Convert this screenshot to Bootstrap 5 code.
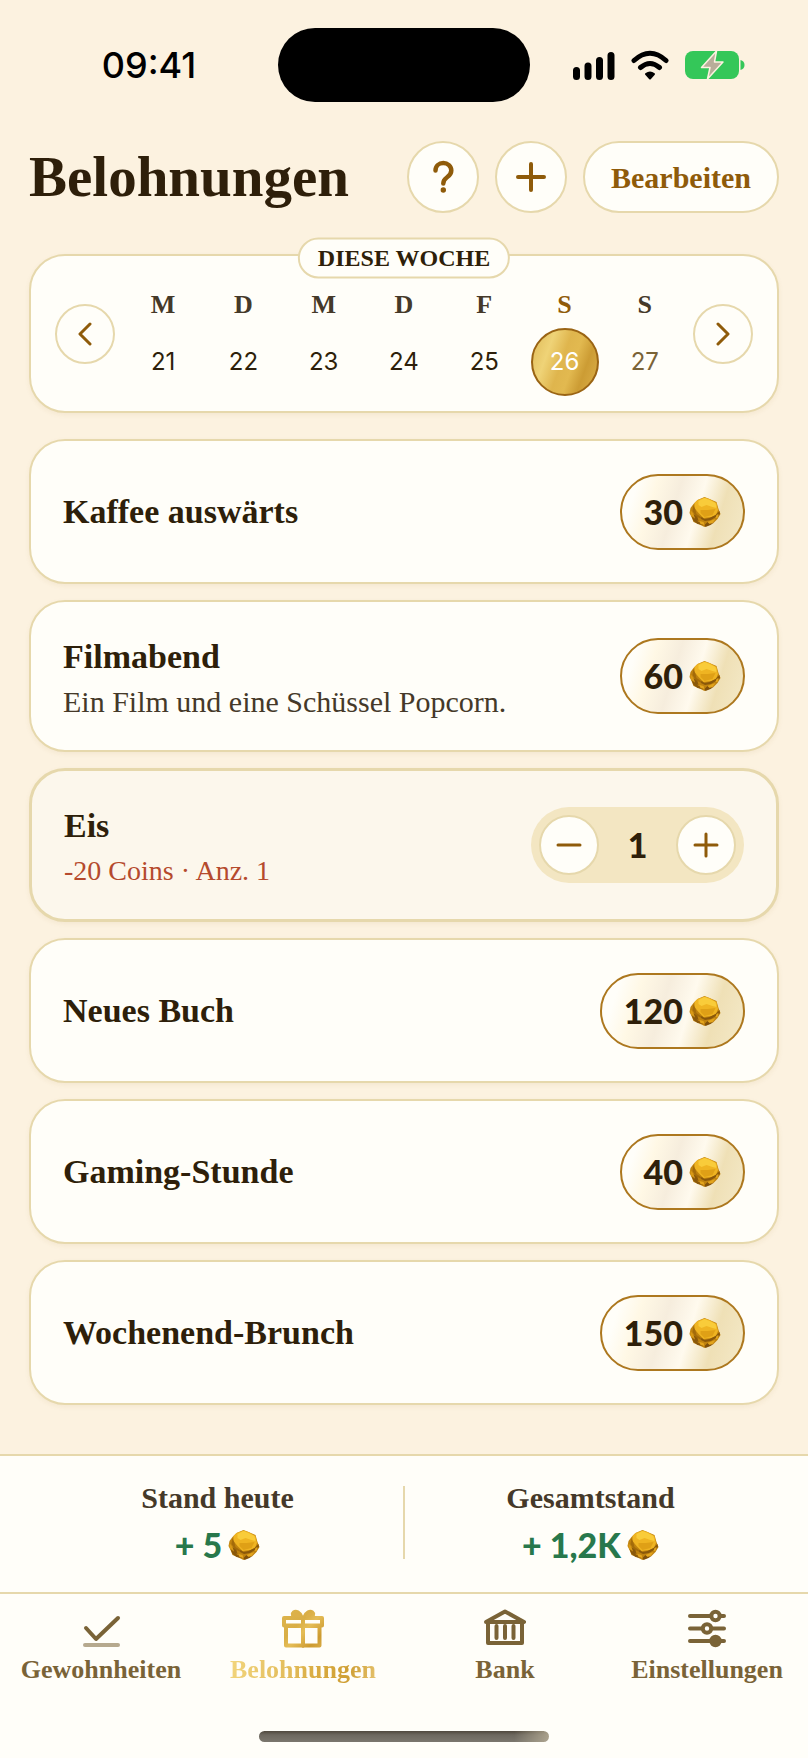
<!DOCTYPE html>
<html lang="de">
<head>
<meta charset="utf-8">
<meta name="viewport" content="width=device-width, initial-scale=1">
<title>Belohnungen</title>
<link href="https://cdn.jsdelivr.net/npm/bootstrap@5.3.0/dist/css/bootstrap.min.css" rel="stylesheet">
<style>
  :root {
    --paper: #fcf2e0;
    --surface: #fffef9;
    --line: #e6d8ac;
    --ink: #2e1f0a;
    --ink-soft: #453929;
    --accent: #8f5b0a;
    --tab: #7a6337;
    --gold: linear-gradient(110deg, #dfba58 0%, #efd377 26%, #dfb54d 46%, #e2b950 60%, #cc9c34 76%, #dcb04a 100%);
    --serif: "Liberation Serif", "Times New Roman", serif;
  }
  body { background: var(--paper); color: var(--ink); font-family: var(--serif); }
  button, a { font-family: inherit; }
  svg { display: block; fill: none; stroke-linecap: round; stroke-linejoin: round; }

  .status-bar { display: grid; grid-template-columns: 1fr 252px 1fr; padding: 28px 20px 0; color: #000; }
  .clock { font: 500 36px/40px Inter, sans-serif; }
  .island { height: 74px; background: #000; }

  .page-main { padding: 39px 29px 46px; }
  .page-title { font-size: 57px; line-height: 72px; font-weight: 700; }
  .soft-btn { background: var(--surface); border: 2px solid var(--line); color: var(--accent);
    display: inline-flex; align-items: center; justify-content: center; padding: 0; border-radius: 50%; }
  .head-btn { width: 72px; height: 72px; }
  .edit-btn { width: auto; padding: 0 26px; border-radius: 36px; font-size: 30px; font-weight: 700; }
  .round-btn { width: 60px; height: 60px; flex: none; }

  .panel { background: var(--surface); border: 2px solid var(--line); border-radius: 36px;
    box-shadow: 0 2px 5px rgba(150, 110, 40, .08); }
  .week { margin-top: 41px; padding: 15px 24px; }
  .week-label { background: var(--surface); border: 2px solid var(--line); font-size: 24px; line-height: 37px;
    font-weight: 700; padding: 0 18px; margin-top: 2px; white-space: nowrap; }
  .days { display: grid; grid-template-columns: repeat(7, 1fr); flex: 1; padding-top: 18px; }
  .day { background: none; border: 0; padding: 0; display: flex; flex-direction: column; align-items: center; gap: 7px; color: var(--ink); }
  .day-name { font-size: 26px; line-height: 32px; font-weight: 700; color: var(--ink-soft); }
  .day-num { width: 68px; height: 68px; border-radius: 50%; display: flex; align-items: center; justify-content: center;
    font: 400 24px/30px Inter, sans-serif; }
  .day.today .day-name { color: var(--accent); }
  .day.today .day-num { background: var(--gold); border: 2px solid #9a6414; color: #fff; }
  .day.later .day-num { color: var(--tab); }

  .rewards { margin-top: 26px; gap: 16px; }
  .reward { min-height: 145px; padding: 27px 32px; }
  .reward.chosen { background: #fcf7ec; border-width: 3px; }
  .reward-name { font-size: 34px; line-height: 48px; font-weight: 700; }
  .reward-note { font-size: 30px; line-height: 42px; color: var(--ink-soft); }
  .reward-cost { font-size: 28px; line-height: 42px; color: #b54a2d; }
  .figure-text { font-family: Lato, sans-serif; font-weight: 900; font-size: 34px; line-height: 40px; }
  .price { height: 76px; border: 2px solid #ad781f; border-radius: 38px; padding: 0 22px; gap: 6px; color: var(--ink); flex: none;
    background: linear-gradient(107deg, #fffef9 12%, #fff8e5 26%, #f6eddd 43%, #fffaee 60%, #efe0b6 77%, #f4e9c8 100%); }
  .stepper { height: 76px; border-radius: 38px; background: #f3e6c2; padding: 0 8px; flex: none; }
  .stepper output { width: 77px; text-align: center; color: var(--ink); }

  .totals { background: var(--surface); border-top: 2px solid var(--line); border-bottom: 2px solid var(--line); padding: 22px 32px 25px; }
  .totals-rule { width: 2px; height: 73px; background: var(--line); }
  .total-name { font-size: 30px; line-height: 40px; font-weight: 700; color: var(--ink-soft); }
  .total-sum { color: #28784c; gap: 6px; margin-top: 5px; line-height: 44px; }

  .tabs { background: var(--surface); padding-top: 13px; display: grid; grid-template-columns: repeat(4, 1fr); }
  .tab-link { color: var(--tab); text-decoration: none; font-size: 26px; line-height: 32px; font-weight: 700; gap: 5px; }
  .tab-link svg { stroke: currentColor; stroke-width: 4; }
  .tab-link.active span { background: linear-gradient(105deg, #f3d67e, #e3bd5c 40%, #d9ab40 60%, #cf9f35 80%, #e6c470); -webkit-background-clip: text; background-clip: text; color: transparent; }
  .home-area { background: var(--surface); padding: 45px 0 16px; }
  .home-pill { width: 36%; height: 11px; background: linear-gradient(90deg, rgba(0,0,0,0) 88%, rgba(190,180,155,.75)), linear-gradient(#4f483d, #6c675e 35%, #7b776e); }
</style>
</head>
<body>
<svg width="0" height="0" class="position-absolute" aria-hidden="true">
  <defs>
    <linearGradient id="goldStroke" gradientUnits="userSpaceOnUse" x1="0" y1="0" x2="42" y2="42">
      <stop offset="0" stop-color="#dfb64e"/><stop offset=".4" stop-color="#d9ae45"/><stop offset=".55" stop-color="#e5bd57"/><stop offset=".8" stop-color="#cd9b31"/><stop offset="1" stop-color="#dcb04a"/>
    </linearGradient>
    <symbol id="nugget" viewBox="0 0 31 30">
      <path fill="#bf820f" d="M4 7 8 3 15 0l5 2 7 3 2 7 2 5-3 5-4 4-9 4-6-3-5-2-2-5-2-4 1-5z"/>
      <path fill="#efb422" d="M5 6 8 3l7-2.500L20 2l7 4 1.500 7-2 5-4.500 2-8 1-5-5-4-5z"/>
      <path fill="#f9cc3a" d="m9 4 6-3 5 2 6 3 1 5-4-1-6-2-5 2-3-2z"/>
      <path fill="#dfa016" d="m11 13 7 0 8-1-3 6-8 2-4-4z"/>
      <path fill="#a36b0a" d="M4 8l2 5 1 4 6 4-1 1-6-3-3-5z"/>
      <path fill="#d99a17" d="m1 13 3 4 4 4v4l-4-2-3-6z"/>
      <path fill="#8a580a" d="m12 20 3 2 5-1 6-3 4-4 .5 3-4 3-5 3-6 1-4-2zM4 17l4 3 1 4-3-1zM2 19l4 3 3 3 5 2-1 1-5-1-4-3z"/>
      <path fill="#e3a51d" d="m10 24 4 1 1 3-4-1zM18 25l5-2 3-1-3 4-4 1zM27 18l2-1-1 4-2 0z"/>
      <path fill="#80500a" d="m15 28 3-3 2 2 4-1-3 2-5 2z"/>
    </symbol>
  </defs>
</svg>

<div class="d-flex flex-column min-vh-100">
  <div class="status-bar align-items-center">
    <div class="clock text-center">09:41</div>
    <div class="island rounded-pill"></div>
    <div class="d-flex justify-content-center align-items-center gap-3" aria-hidden="true">
      <svg width="42" height="30" viewBox="0 0 42 30" stroke="#000" stroke-width="7"><path d="M3.500 20.500v6M15 16v10.500M26.500 10.500v16M38 5.500v21"/></svg>
      <svg width="38" height="30" viewBox="0 0 38 30" stroke="#000" stroke-width="5"><path d="M3 10.500Q19-4 35 10.500M9.500 17.500Q19 9.500 28.500 17.500"/><path d="M19 28.500l-4-4.500q4-3 8 0z" fill="#000" stroke-width="2"/></svg>
      <svg width="60" height="30" viewBox="0 0 60 30"><rect y="1" width="54" height="28" rx="8" fill="#34c759"/><path d="M55.500 10q4 1 4 5t-4 5z" fill="#34c759"/><path d="M31.500 1 16.500 17.500h8.500l-2.500 11.500 15.500-17h-8.500z" fill="#b8ad99" stroke="#fcf2e0" stroke-width="1.500"/></svg>
    </div>
  </div>

  <main class="page-main">
    <header class="d-flex align-items-center justify-content-between">
      <h1 class="page-title mb-0">Belohnungen</h1>
      <div class="d-flex gap-3">
        <button type="button" class="soft-btn head-btn" aria-label="Hilfe"><svg width="36" height="36" viewBox="0 0 36 36" stroke="currentColor" stroke-width="4.500"><path d="M10.500 11.500C10.500 7 14 4 18.300 4s8 3 8 7.500c0 3-1.500 5-4.500 7-2.500 1.700-3.500 3-3.500 6"/><circle cx="18.300" cy="31" r="2.700" fill="currentColor" stroke="none"/></svg></button>
        <button type="button" class="soft-btn head-btn" aria-label="Hinzufügen"><svg width="36" height="36" viewBox="0 0 36 36" stroke="currentColor" stroke-width="4"><path d="M18 5v26M5 18h26"/></svg></button>
        <button type="button" class="soft-btn head-btn edit-btn">Bearbeiten</button>
      </div>
    </header>

    <section class="panel week position-relative d-flex align-items-center gap-2">
      <div class="week-label rounded-pill position-absolute top-0 start-50 translate-middle">DIESE WOCHE</div>
      <button type="button" class="soft-btn round-btn" aria-label="Vorherige Woche"><svg width="24" height="24" viewBox="0 0 24 24" stroke="currentColor" stroke-width="3"><path d="M17 2 7 12l10 10"/></svg></button>
      <div class="days">
        <button type="button" class="day"><span class="day-name">M</span><span class="day-num">21</span></button>
        <button type="button" class="day"><span class="day-name">D</span><span class="day-num">22</span></button>
        <button type="button" class="day"><span class="day-name">M</span><span class="day-num">23</span></button>
        <button type="button" class="day"><span class="day-name">D</span><span class="day-num">24</span></button>
        <button type="button" class="day"><span class="day-name">F</span><span class="day-num">25</span></button>
        <button type="button" class="day today"><span class="day-name">S</span><span class="day-num">26</span></button>
        <button type="button" class="day later"><span class="day-name">S</span><span class="day-num">27</span></button>
      </div>
      <button type="button" class="soft-btn round-btn" aria-label="Nächste Woche"><svg width="24" height="24" viewBox="0 0 24 24" stroke="currentColor" stroke-width="3"><path d="m7 2 10 10L7 22"/></svg></button>
    </section>

    <section class="rewards d-flex flex-column">
      <article class="panel reward d-flex align-items-center justify-content-between">
        <h2 class="reward-name mb-0">Kaffee auswärts</h2>
        <button type="button" class="price figure-text d-flex align-items-center">30<svg width="32" height="30"><use href="#nugget"/></svg></button>
      </article>
      <article class="panel reward d-flex align-items-center justify-content-between">
        <div class="pt-1">
          <h2 class="reward-name mb-0">Filmabend</h2>
          <p class="reward-note mb-0">Ein Film und eine Schüssel Popcorn.</p>
        </div>
        <button type="button" class="price figure-text d-flex align-items-center">60<svg width="32" height="30"><use href="#nugget"/></svg></button>
      </article>
      <article class="panel reward chosen d-flex align-items-center justify-content-between">
        <div class="pt-1">
          <h2 class="reward-name mb-0">Eis</h2>
          <p class="reward-cost mb-0">-20 Coins · Anz. 1</p>
        </div>
        <div class="stepper d-flex align-items-center">
          <button type="button" class="soft-btn round-btn" aria-label="Weniger"><svg width="28" height="28" viewBox="0 0 28 28" stroke="currentColor" stroke-width="3"><path d="M3 14h22"/></svg></button>
          <output class="figure-text">1</output>
          <button type="button" class="soft-btn round-btn" aria-label="Mehr"><svg width="28" height="28" viewBox="0 0 28 28" stroke="currentColor" stroke-width="3"><path d="M3 14h22M14 3v22"/></svg></button>
        </div>
      </article>
      <article class="panel reward d-flex align-items-center justify-content-between">
        <h2 class="reward-name mb-0">Neues Buch</h2>
        <button type="button" class="price figure-text d-flex align-items-center">120<svg width="32" height="30"><use href="#nugget"/></svg></button>
      </article>
      <article class="panel reward d-flex align-items-center justify-content-between">
        <h2 class="reward-name mb-0">Gaming-Stunde</h2>
        <button type="button" class="price figure-text d-flex align-items-center">40<svg width="32" height="30"><use href="#nugget"/></svg></button>
      </article>
      <article class="panel reward d-flex align-items-center justify-content-between">
        <h2 class="reward-name mb-0">Wochenend-Brunch</h2>
        <button type="button" class="price figure-text d-flex align-items-center">150<svg width="32" height="30"><use href="#nugget"/></svg></button>
      </article>
    </section>
  </main>

  <footer class="mt-auto">
    <section class="totals d-flex align-items-center">
      <div class="flex-fill w-50 text-center">
        <div class="total-name">Stand heute</div>
        <div class="total-sum figure-text d-flex justify-content-center align-items-center">+ 5<svg width="32" height="30"><use href="#nugget"/></svg></div>
      </div>
      <div class="totals-rule flex-shrink-0"></div>
      <div class="flex-fill w-50 text-center">
        <div class="total-name">Gesamtstand</div>
        <div class="total-sum figure-text d-flex justify-content-center align-items-center">+ 1,2K<svg width="32" height="30"><use href="#nugget"/></svg></div>
      </div>
    </section>
    <nav class="tabs">
      <a href="#" class="tab-link d-flex flex-column align-items-center">
        <svg width="42" height="42" viewBox="0 0 42 42"><path d="M6 21 16 32 38 11"/><path d="M5 38h33" opacity=".55"/></svg><span>Gewohnheiten</span></a>
      <a href="#" class="tab-link active d-flex flex-column align-items-center" aria-current="page">
        <svg width="42" height="42" viewBox="0 0 42 42"><g stroke="url(#goldStroke)"><path d="M2 11h38v7.500H2zM4 19h33.500v19.500H4zM21 11v28"/><path d="M20 10C18 5 14 3 11.500 5S11 9 12 10M22 10c2-5 6-7 8.500-5s.5 4-.5 5" fill="#dcb04a" stroke-width="3"/></g></svg><span>Belohnungen</span></a>
      <a href="#" class="tab-link d-flex flex-column align-items-center">
        <svg width="42" height="42" viewBox="0 0 42 42"><path d="M2 15 21 4.500 40 15zM4 15v21h34V15M12.500 19v12M21 19v12M29.500 19v12"/></svg><span>Bank</span></a>
      <a href="#" class="tab-link d-flex flex-column align-items-center">
        <svg width="42" height="42" viewBox="0 0 42 42"><path d="M4 9h34M4 21.500h34M4 34h34"/><g fill="#fffef9"><circle cx="29.500" cy="9" r="4.200"/><circle cx="21" cy="21.500" r="4.200"/><circle cx="29.500" cy="34" r="4.200" fill="currentColor"/></g></svg><span>Einstellungen</span></a>
    </nav>
    <div class="home-area"><div class="home-pill rounded-pill mx-auto"></div></div>
  </footer>
</div>
<script src="https://cdn.jsdelivr.net/npm/bootstrap@5.3.0/dist/js/bootstrap.bundle.min.js"></script>
</body>
</html>
